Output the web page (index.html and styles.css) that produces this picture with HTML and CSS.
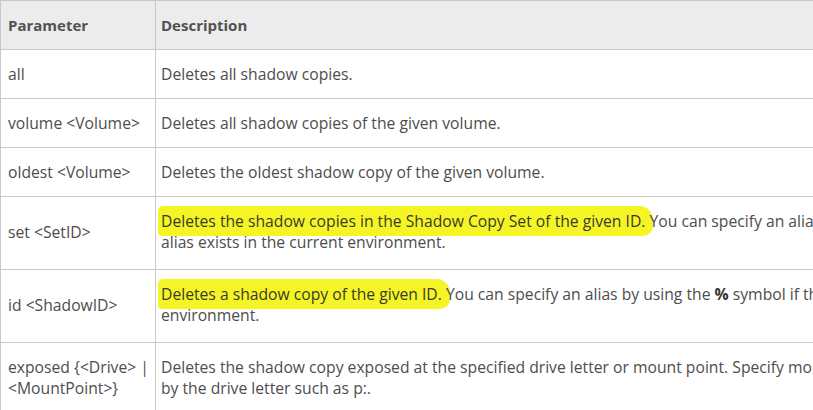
FILE: index.html
```html
<!DOCTYPE html>
<html>
  <head>
    <title>Delete shadows parameters</title>
    <link rel="stylesheet" href="styles.css">
  </head>
  <body>
    <table class="params">
      <thead>
        <tr>
          <th class="col-param">Parameter</th>
          <th>Description</th>
        </tr>
      </thead>
      <tbody>
        <tr>
          <td>all</td>
          <td>Deletes all shadow copies.</td>
        </tr>
        <tr>
          <td>volume &lt;Volume&gt;</td>
          <td>Deletes all shadow copies of the given volume.</td>
        </tr>
        <tr>
          <td>oldest &lt;Volume&gt;</td>
          <td>Deletes the oldest shadow copy of the given volume.</td>
        </tr>
        <tr class="tall">
          <td>set &lt;SetID&gt;</td>
          <td>
            <span class="mark">Deletes the shadow copies in the Shadow Copy Set of the given ID.</span> You can specify an alias by using the <b>%</b> symbol if the<br>
            alias exists in the current environment.
          </td>
        </tr>
        <tr class="tall">
          <td>id &lt;ShadowID&gt;</td>
          <td>
            <span class="mark">Deletes a shadow copy of the given ID.</span> You can specify an alias by using the <b>%</b> symbol if the alias exists in the current<br>
            environment.
          </td>
        </tr>
        <tr class="tall">
          <td>exposed {&lt;Drive&gt; |<br>&lt;MountPoint&gt;}</td>
          <td>
            Deletes the shadow copy exposed at the specified drive letter or mount point. Specify mount points<br>
            by the drive letter such as p:.
          </td>
        </tr>
      </tbody>
    </table>
  </body>
</html>
```

FILE: styles.css
```css
body {
  margin: 0;
  background: #fff;
  overflow: hidden;
  font-family: "Open Sans", "Noto Sans", sans-serif;
}

.params {
  border-collapse: collapse;
  width: 1300px;
  table-layout: fixed;
  color: #4d4d4d;
  font-size: 15.7px;
}

.params th,
.params td {
  border: 1px solid #c9c9c9;
  padding: 0 5px 0 7px;
  text-align: left;
  vertical-align: middle;
  white-space: nowrap;
  line-height: 21px;
  height: 48px;
}

.params td + td,
.params th + th {
  padding-left: 5px;
}

.params th {
  background: #ececec;
  font-weight: bold;
  font-size: 15px;
  color: #525252;
  height: 48px;
}

.col-param {
  width: 142px;
}

.params tr.tall td {
  height: 70px;
  padding-bottom: 2px;
}

.params b {
  color: #333;
}

/* marker highlight */
.mark {
  background: #f5f526;
  color: #3a3a2a;
  padding: 4px 8px 4px 3px;
  margin-left: -3px;
  margin-right: -8px;
  border-radius: 5px 14px 10px 4px;
}
```
